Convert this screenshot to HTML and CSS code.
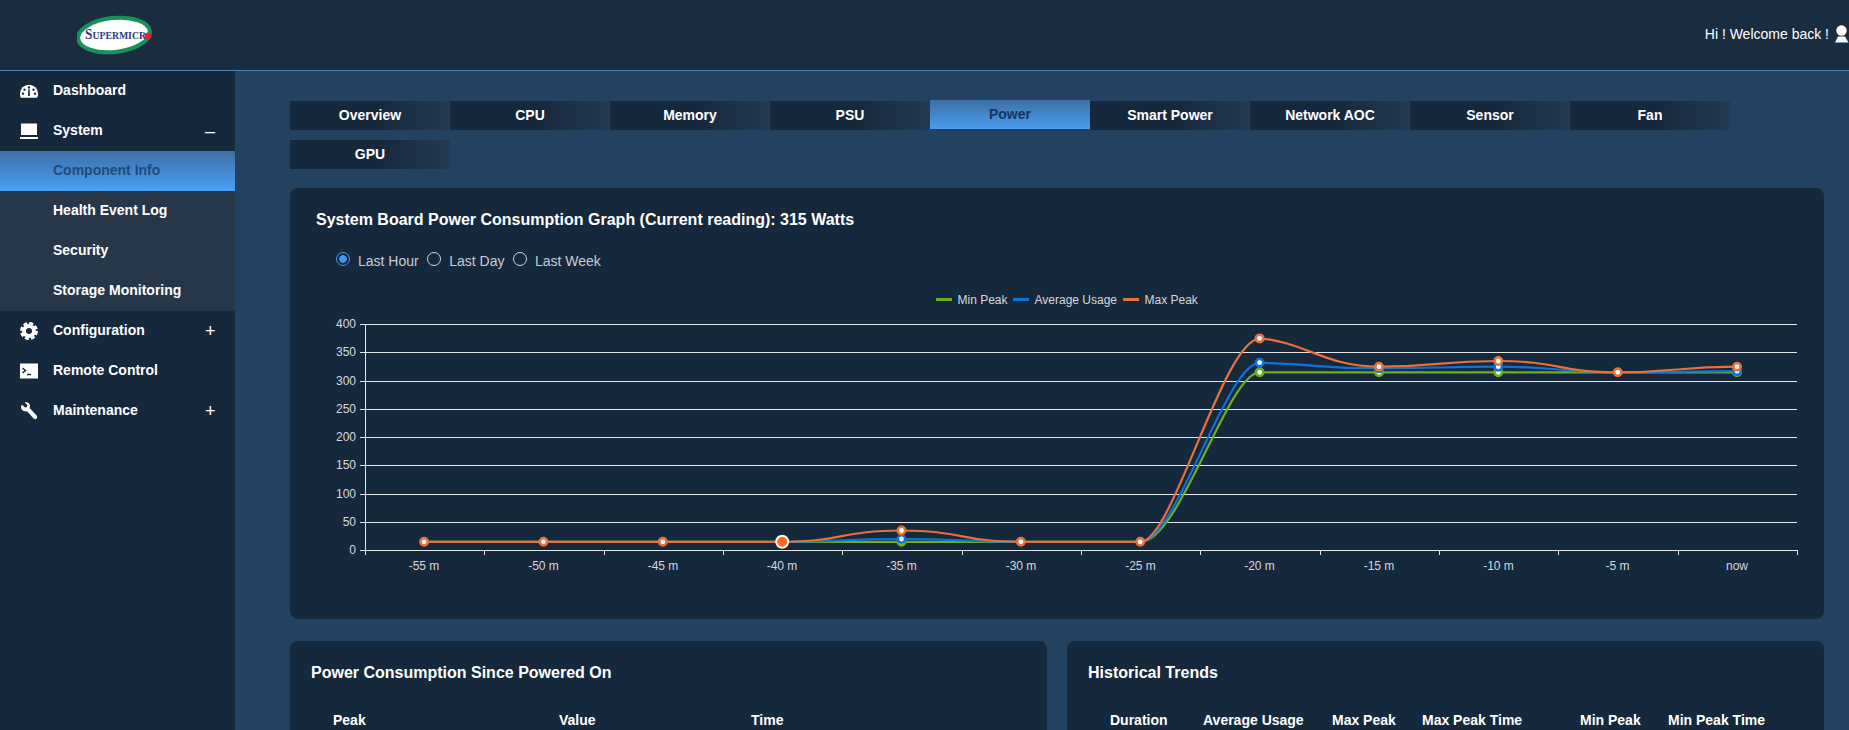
FILE: index.html
```html
<!DOCTYPE html>
<html lang="en">
<head>
<meta charset="utf-8">
<title>Supermicro Power</title>
<link rel="stylesheet" href="styles.css">
</head>
<body>
<header class="topbar">
  <svg class="logo" width="80" height="44" viewBox="0 0 80 44">
    <ellipse cx="37" cy="22" rx="36" ry="17" transform="rotate(-6 37 22)" fill="#fff" stroke="#17935a" stroke-width="4"/>
    <text class="logo-text" x="8" y="26" textLength="61" lengthAdjust="spacingAndGlyphs"><tspan class="logo-cap">S</tspan>UPERMICR</text>
    <circle cx="71" cy="23" r="3.500" fill="#d8262c"/>
  </svg>
  <div class="welcome">
    <span>Hi ! Welcome back !</span>
    <svg width="14" height="18" viewBox="0 0 14 18"><circle cx="6.500" cy="5.500" r="5.200" fill="#fff"/><path d="M3 11.500h7l3.500 6H0z" fill="#fff"/></svg>
  </div>
</header>
<div class="shell">
  <nav class="sidebar">
    <a class="nav-item"><svg class="nav-icon" viewBox="0 0 20 16"><path d="M10 1a10 10 0 0 0-10 10c0 2 .4 3.400 1 4.500h18c.6-1.100 1-2.500 1-4.500A10 10 0 0 0 10 1z" fill="#fff"/><g fill="#16283c"><circle cx="10" cy="4" r="1.300"/><circle cx="5" cy="6.500" r="1.300"/><circle cx="15" cy="6.500" r="1.300"/><circle cx="3.300" cy="11" r="1.300"/><circle cx="16.700" cy="11" r="1.300"/><path d="M9.200 6h1.600l.2 7.500H9z"/></g></svg><span class="nav-label">Dashboard</span></a>
    <a class="nav-item"><svg class="nav-icon" viewBox="0 0 18 16"><rect x="1" y="0.500" width="16" height="11.500" fill="#fff"/><rect x="0" y="14" width="18" height="2" fill="#fff"/></svg><span class="nav-label">System</span><span class="toggle">–</span></a>
    <div class="submenu">
      <a class="sub-item active">Component Info</a>
      <a class="sub-item">Health Event Log</a>
      <a class="sub-item">Security</a>
      <a class="sub-item">Storage Monitoring</a>
    </div>
    <a class="nav-item"><svg class="nav-icon" viewBox="0 0 18 18"><circle cx="9" cy="9" r="5" fill="none" stroke="#fff" stroke-width="4"/><circle cx="9" cy="9" r="7.700" fill="none" stroke="#fff" stroke-width="2.600" stroke-dasharray="4 2.050"/></svg><span class="nav-label">Configuration</span><span class="toggle">+</span></a>
    <a class="nav-item"><svg class="nav-icon" viewBox="0 0 18 16"><rect width="18" height="15" y="0.500" fill="#fff"/><path d="M2.500 5l3 2.500-3 2.500" fill="none" stroke="#16283c" stroke-width="1.500"/><path d="M7 11.500h4" stroke="#16283c" stroke-width="1.500"/></svg><span class="nav-label">Remote Control</span></a>
    <a class="nav-item"><svg class="nav-icon" viewBox="0 0 18 18"><path d="M2 2.800l3.200 2.800 1.800-.6.400-2L4.600.500C7-.5 10 1 10 4c0 .8-.1 1.400-.4 2l7 7.500c.8 1 .8 2.200 0 3.100-.9.900-2.200.8-3-.1L7 9.300C4 10 1 8 1 5c0-.8.400-1.600 1-2.200z" fill="#fff"/></svg><span class="nav-label">Maintenance</span><span class="toggle">+</span></a>
  </nav>
  <main class="content">
    <div class="tabs">
      <a class="tab">Overview</a>
      <a class="tab">CPU</a>
      <a class="tab">Memory</a>
      <a class="tab">PSU</a>
      <a class="tab tab-active">Power</a>
      <a class="tab">Smart Power</a>
      <a class="tab">Network AOC</a>
      <a class="tab">Sensor</a>
      <a class="tab">Fan</a>
      <a class="tab">GPU</a>
    </div>
    <section class="card graph-card">
      <h2 class="graph-title">System Board Power Consumption Graph (Current reading): 315 Watts</h2>
      <div class="radios">
        <label class="radio-label"><input class="radio" type="radio" name="range" checked>Last Hour</label>
        <label class="radio-label"><input class="radio" type="radio" name="range">Last Day</label>
        <label class="radio-label"><input class="radio" type="radio" name="range">Last Week</label>
      </div>
      <svg class="chart" width="1534" height="339" viewBox="290 280 1534 339">
        <g class="legend">
          <rect x="936" y="298" width="16" height="3" fill="#6cae22"/><text x="957.500" y="304">Min Peak</text>
          <rect x="1013" y="298" width="16" height="3" fill="#0a75d8"/><text x="1034.500" y="304">Average Usage</text>
          <rect x="1123" y="298" width="16" height="3" fill="#e8703a"/><text x="1144.500" y="304">Max Peak</text>
        </g>
        <g class="grid">
          <path d="M360 324.500H1797M360 352.500H1797M360 381.500H1797M360 409.500H1797M360 437.500H1797M360 465.500H1797M360 494.500H1797M360 522.500H1797M360 550.500H1797"/>
          <path d="M365.500 324V550M365.500 550V555M484.500 550V555M604.500 550V555M723.500 550V555M842.500 550V555M962.500 550V555M1081.500 550V555M1200.500 550V555M1320.500 550V555M1439.500 550V555M1558.500 550V555M1678.500 550V555M1797.500 550V555"/>
        </g>
        <g class="y-labels">
          <text x="356" y="328">400</text><text x="356" y="356">350</text><text x="356" y="385">300</text><text x="356" y="413">250</text><text x="356" y="441">200</text><text x="356" y="469">150</text><text x="356" y="498">100</text><text x="356" y="526">50</text><text x="356" y="554">0</text>
        </g>
        <g class="x-labels">
          <text x="424" y="570">-55 m</text><text x="543.500" y="570">-50 m</text><text x="663" y="570">-45 m</text><text x="782" y="570">-40 m</text><text x="901.500" y="570">-35 m</text><text x="1021" y="570">-30 m</text><text x="1140.500" y="570">-25 m</text><text x="1259.500" y="570">-20 m</text><text x="1379" y="570">-15 m</text><text x="1498.500" y="570">-10 m</text><text x="1617.500" y="570">-5 m</text><text x="1737" y="570">now</text>
        </g>
        <path class="line line-min" d="M424.100 541.800H1140.300C1180 541.800 1228 372.300 1259.600 372.300H1737"/>
        <path class="line line-avg" d="M424.100 541.800H782.200C842 541.800 842 539 901.500 539C961 539 961 541.800 1020.900 541.800H1140.300C1176 541.800 1226 363.900 1259.600 362.700C1320 364.500 1320 368.300 1379 368.300C1438 368.300 1438 366.700 1498.300 366.700C1558 366.700 1558 372.300 1617.700 372.300C1677 372.300 1677 371.200 1737 371.200"/>
        <path class="line line-max" d="M424.100 541.800H782.200C842 541.800 842 530.500 901.500 530.500C961 530.500 961 541.800 1020.900 541.800H1140.300C1173 541.800 1222 342 1259.600 338.400C1305 342 1325 366.700 1379 366.700C1438 366.700 1438 361 1498.300 361C1558 361 1558 372.300 1617.700 372.300C1677 372.300 1677 366.700 1737 366.700"/>
        <g class="dots dots-min">
          <circle cx="901.500" cy="541.800" r="3.700"/><circle cx="1259.600" cy="372.300" r="3.700"/><circle cx="1379" cy="372.300" r="3.700"/><circle cx="1498.300" cy="372.300" r="3.700"/><circle cx="1737" cy="372.300" r="3.700"/>
        </g>
        <g class="dots dots-avg">
          <circle cx="901.500" cy="539" r="3.700"/><circle cx="1259.600" cy="362.700" r="3.700"/><circle cx="1379" cy="368.300" r="3.700"/><circle cx="1498.300" cy="366.700" r="3.700"/><circle cx="1737" cy="371.200" r="3.700"/>
        </g>
        <g class="dots dots-max">
          <circle cx="424.100" cy="541.800" r="3.700"/><circle cx="543.500" cy="541.800" r="3.700"/><circle cx="662.800" cy="541.800" r="3.700"/><circle cx="901.500" cy="530.500" r="3.700"/><circle cx="1020.900" cy="541.800" r="3.700"/><circle cx="1140.300" cy="541.800" r="3.700"/><circle cx="1259.600" cy="338.400" r="3.700"/><circle cx="1379" cy="366.700" r="3.700"/><circle cx="1498.300" cy="361" r="3.700"/><circle cx="1617.700" cy="372.300" r="3.700"/><circle cx="1737" cy="366.700" r="3.700"/>
        </g>
        <circle class="dot-hover" cx="782.200" cy="541.800" r="6"/>
      </svg>
    </section>
    <div class="bottom-row">
      <section class="card table-card">
        <h2 class="table-title">Power Consumption Since Powered On</h2>
        <div class="table-head cols-left"><span>Peak</span><span>Value</span><span>Time</span></div>
      </section>
      <section class="card table-card">
        <h2 class="table-title">Historical Trends</h2>
        <div class="table-head cols-right"><span>Duration</span><span>Average Usage</span><span>Max Peak</span><span>Max Peak Time</span><span>Min Peak</span><span>Min Peak Time</span></div>
      </section>
    </div>
  </main>
</div>
</body>
</html>
```
FILE: styles.css
```css
* { box-sizing: border-box; }
html, body { margin: 0; height: 730px; overflow: hidden; }
body { font-family: "Liberation Sans", Arial, sans-serif; font-size: 14px; color: #fff; background: #234161; }

.topbar { height: 71px; background: #1a2c40; border-bottom: 1px solid #4a7fb8; display: flex; align-items: center; justify-content: space-between; padding-left: 77px; }
.logo { display: block; margin-bottom: 1px; }
.logo-text { font-family: "Liberation Serif", serif; font-size: 11px; fill: #2b3a7c; font-weight: 700; }
.logo-cap { font-size: 15px; }
.welcome { display: flex; align-items: center; gap: 6px; margin-bottom: 3px; }

.shell { display: flex; height: 659px; }
.sidebar { width: 235px; flex: none; background: #16283c; }
.nav-item { height: 40px; display: flex; align-items: center; padding-left: 20px; font-weight: 700; }
.nav-label { margin-bottom: 2px; }
.nav-icon { width: 18px; height: 18px; margin-right: 15px; flex: none; }
.toggle { margin-left: auto; width: 30px; font-size: 18px; font-weight: 400; }
.submenu { background: #253748; }
.sub-item { height: 40px; display: flex; align-items: center; padding: 0 0 2px 53px; font-weight: 700; }
.sub-item.active { background: linear-gradient(#3d6fa5, #4aa0f5); color: #1f4a7a; }

.content { flex: 1; padding: 30px 25px 0 55px; overflow: hidden; min-width: 0; }
.tabs { display: flex; flex-wrap: wrap; row-gap: 10px; }
.tab { width: 160px; height: 29px; display: flex; align-items: center; justify-content: center; padding-bottom: 2px; font-weight: 700; background: linear-gradient(90deg, #16283c 55%, #243a51); }
.tab-active { margin: -1px 0 1px; background: linear-gradient(#3d6fa5, #4a9df0); color: #17335f; }

.card { background: #16283c; border-radius: 8px; }
.graph-card { margin-top: 19px; height: 431px; display: flex; flex-direction: column; }
.graph-title { margin: 0; padding: 23px 0 0 26px; font-size: 16px; line-height: 18px; font-weight: 700; }
.radios { display: flex; gap: 8.500px; height: 32px; margin-top: 16px; padding-left: 46px; align-items: center; color: #c6ccd3; }
.radio-label { display: flex; align-items: center; }
.radio { appearance: none; width: 14px; height: 14px; margin: -3px 8px 0 0; border: 1px solid #d5d9de; border-radius: 50%; background: transparent; }
.radio:checked { border-color: #3f9bf0; background: radial-gradient(circle, #3f9bf0 0 3.500px, transparent 4px); }
.chart { display: block; margin-top: 4px; flex: none; }
.chart text { font-size: 12px; fill: #d5d8dc; }
.x-labels text { text-anchor: middle; }
.y-labels text { text-anchor: end; }
.grid path { fill: none; stroke: #e4e7ea; stroke-width: 1; }
.line { fill: none; stroke-width: 2.200; }
.line-min { stroke: #6cae22; }
.line-avg { stroke: #0a75d8; }
.line-max { stroke: #e8703a; }
.dots circle { fill: #fff; stroke-width: 2.600; }
.dots-min circle { stroke: #6cae22; }
.dots-avg circle { stroke: #0a75d8; }
.dots-max circle { stroke: #e8703a; }
.dot-hover { fill: #ff6a1f; stroke: #fff; stroke-width: 2; }

.bottom-row { display: grid; grid-template-columns: 757px 757px; gap: 20px; margin-top: 22px; }
.table-card { height: 200px; padding: 23px 21px 0; }
.table-title { margin: 0; font-size: 16px; line-height: 18px; font-weight: 700; }
.table-head { display: grid; margin-top: 30px; font-weight: 700; line-height: 16px; }
.cols-left { grid-template-columns: 226px 192px 1fr; padding-left: 22px; }
.cols-right { grid-template-columns: 93px 129px 90px 158px 88px 1fr; padding-left: 22px; }
```
